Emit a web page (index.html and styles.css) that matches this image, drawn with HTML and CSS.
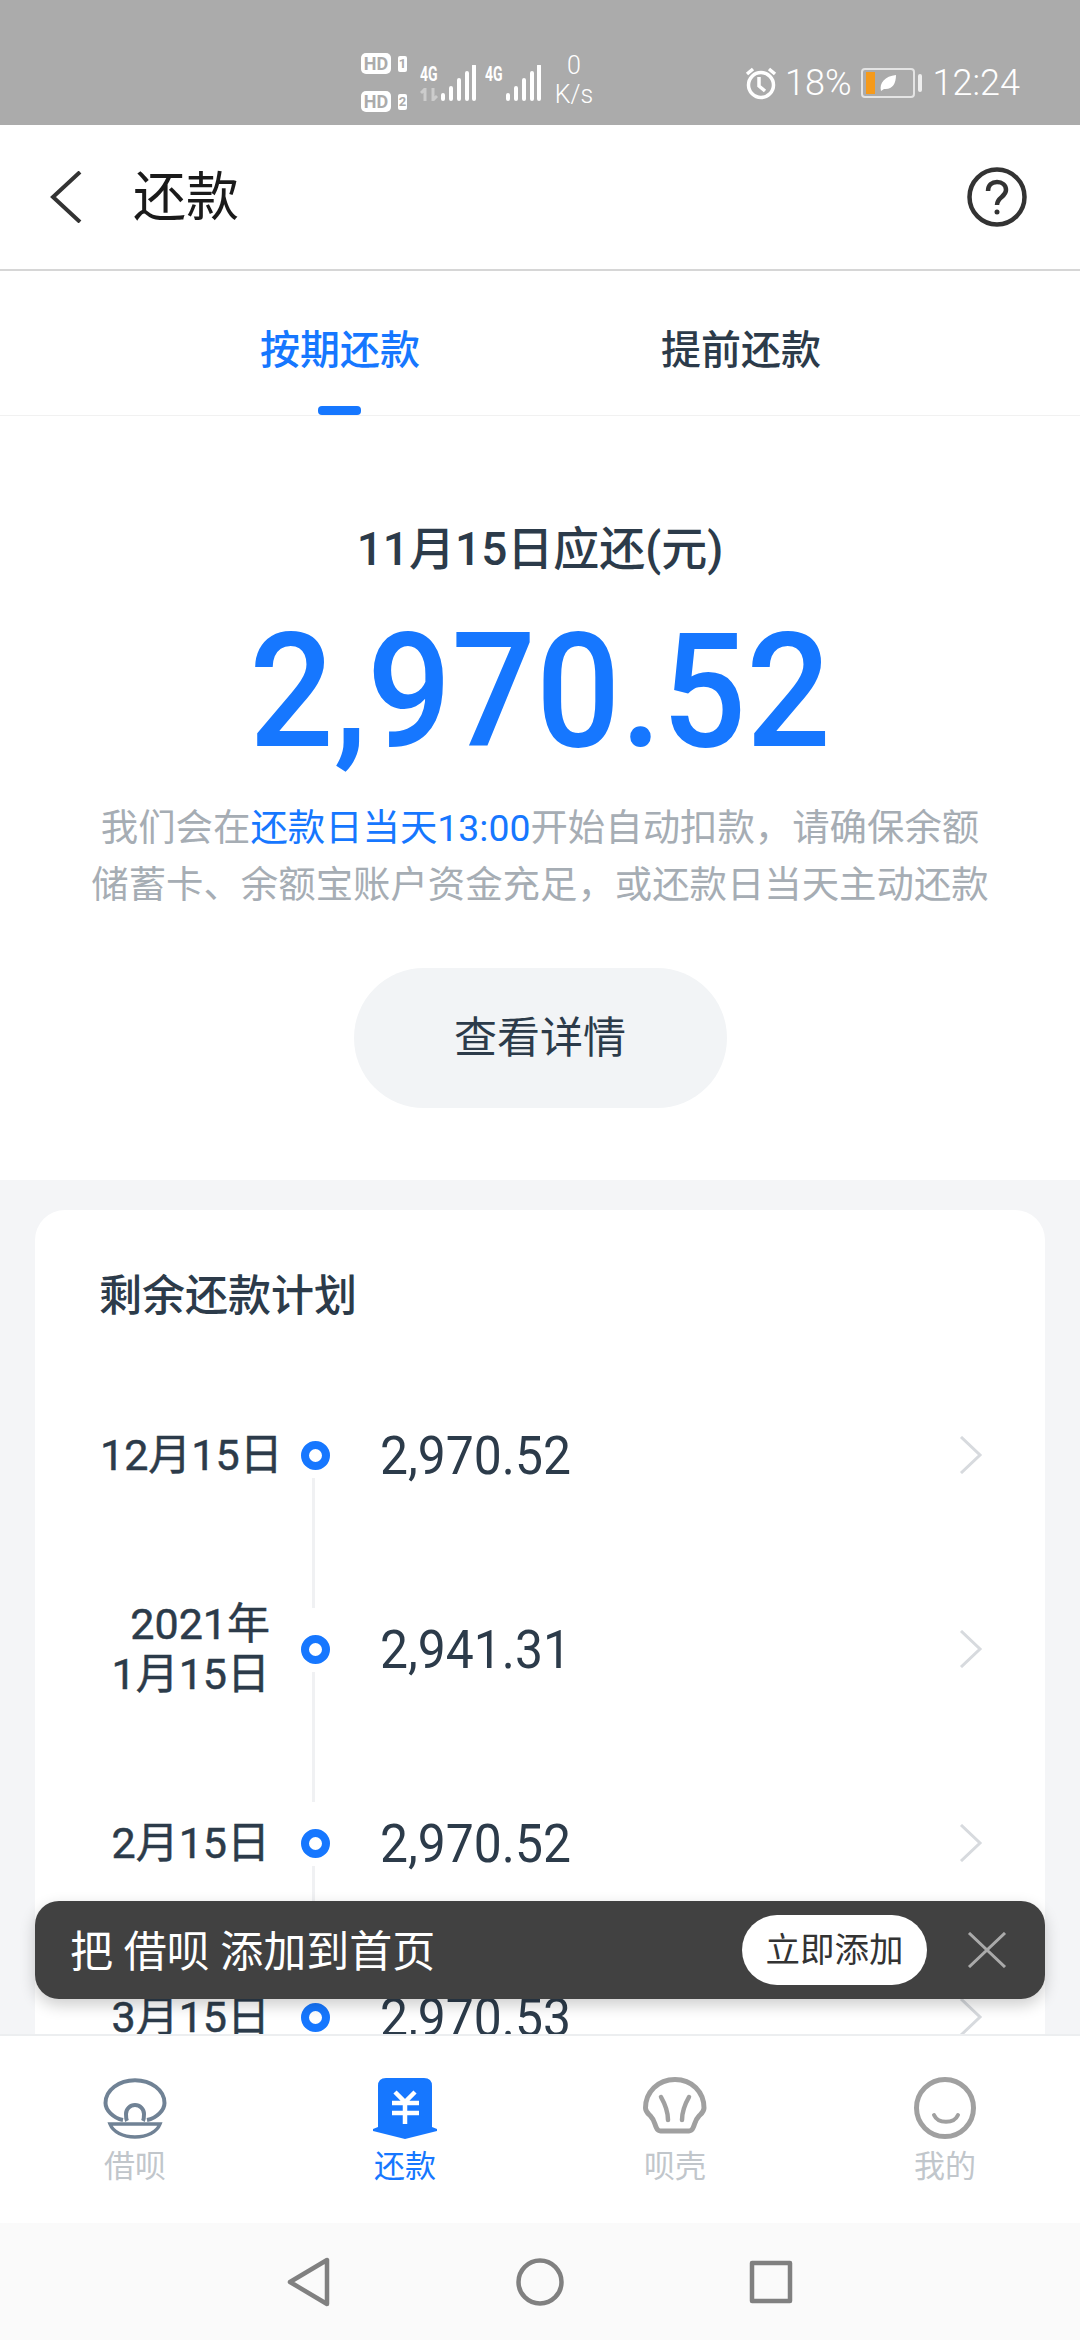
FILE: index.html
```html
<!DOCTYPE html>
<html>
<head>
    <meta charset="utf-8">
    <title>还款</title>
    <link rel="stylesheet" href="styles.css">
</head>
<body>
<div class="app">
    <div class="statusBar">
        <div class="hdCol">
            <div class="hdLine"><span class="hdBadge">HD</span><span class="hdNum">1</span></div>
            <div class="hdLine"><span class="hdBadge">HD</span><span class="hdNum">2</span></div>
        </div>
        <div class="signal">
            <div class="netCol">
                <span class="netType">4G</span>
                <svg width="18" height="13" viewBox="0 0 18 13" fill="none" stroke="#fff" stroke-opacity="0.4" stroke-width="3"><path d="M5 13V1L1 5M13 0v12l4-4"/></svg>
            </div>
            <svg width="36" height="36" viewBox="0 0 36 36"><path d="M3 30v4M11 23v11M19 15v19M27 8v26M34 1v33" stroke="#fff" stroke-width="4" stroke-linecap="round"/></svg>
        </div>
        <div class="signal">
            <div class="netCol">
                <span class="netType">4G</span>
            </div>
            <svg width="36" height="36" viewBox="0 0 36 36"><path d="M3 30v4M11 23v11M19 15v19M27 8v26M34 1v33" stroke="#fff" stroke-width="4" stroke-linecap="round"/></svg>
        </div>
        <div class="speed"><span>0</span><span>K/s</span></div>
        <div class="statusRight">
            <svg width="34" height="34" viewBox="0 0 34 34" fill="none" stroke="#fff" stroke-width="3.5"><circle cx="17" cy="19" r="12.5"/><path d="M15 11v9l6 5M3 8l6-5M31 8l-6-5"/></svg>
            <span class="statusText pct">18%</span>
            <div class="battery"><span class="batteryFill"></span>
                <svg width="18" height="18" viewBox="0 0 18 18"><path d="M2 17C0 9 6 2 17 1c0 9-4 15-12 14z" fill="#fff"/></svg>
            </div>
            <span class="batteryNub"></span>
            <span class="statusText">12:24</span>
        </div>
    </div>

    <div class="header">
        <svg class="backIcon" width="32" height="52" viewBox="0 0 32 52" fill="none"><path d="M30 1L3 26l27 25" stroke="#333" stroke-width="4"/></svg>
        <div class="headerTitle">还款</div>
        <svg class="helpIcon" width="60" height="60" viewBox="0 0 60 60" fill="none" stroke="#333" stroke-width="4.5"><circle cx="30" cy="30" r="27.5"/><path d="M21 24c0-6 4-9 9-9s9 3 9 8c0 7-9 7-9 15"/><circle cx="30" cy="45" r="2.5" fill="#333" stroke="none"/></svg>
    </div>

    <div class="tabs">
        <div class="tab tabActive">按期还款</div>
        <div class="tab">提前还款</div>
    </div>

    <div class="content">
        <div class="summary">
            <div class="dueDate">11月15日应还(元)</div>
            <div class="dueAmount">2,970.52</div>
            <div class="dueNote">我们会在<span class="noteBlue">还款日当天13:00</span>开始自动扣款，请确保余额<br>储蓄卡、余额宝账户资金充足，或还款日当天主动还款</div>
            <div class="detailBtn">查看详情</div>
        </div>

        <div class="planArea">
            <div class="planCard">
                <div class="planTitle">剩余还款计划</div>
                <div class="planRow">
                    <div class="planDate">12月15日</div>
                    <div class="planDot"><span class="planLine"></span></div>
                    <div class="planAmount">2,970.52</div>
                    <svg class="planArrow" width="24" height="38" viewBox="0 0 24 38" fill="none"><path d="M2 1l19 18L2 37" stroke="#d7dade" stroke-width="3"/></svg>
                </div>
                <div class="planRow planRowTall">
                    <div class="planDate">2021年<br>1月15日</div>
                    <div class="planDot"><span class="planLine"></span></div>
                    <div class="planAmount">2,941.31</div>
                    <svg class="planArrow" width="24" height="38" viewBox="0 0 24 38" fill="none"><path d="M2 1l19 18L2 37" stroke="#d7dade" stroke-width="3"/></svg>
                </div>
                <div class="planRow">
                    <div class="planDate">2月15日</div>
                    <div class="planDot"><span class="planLine"></span></div>
                    <div class="planAmount">2,970.52</div>
                    <svg class="planArrow" width="24" height="38" viewBox="0 0 24 38" fill="none"><path d="M2 1l19 18L2 37" stroke="#d7dade" stroke-width="3"/></svg>
                </div>
                <div class="planRow">
                    <div class="planDate">3月15日</div>
                    <div class="planDot"></div>
                    <div class="planAmount">2,970.53</div>
                    <svg class="planArrow" width="24" height="38" viewBox="0 0 24 38" fill="none"><path d="M2 1l19 18L2 37" stroke="#d7dade" stroke-width="3"/></svg>
                </div>
            </div>
        </div>
    </div>

    <div class="tabBar">
        <div class="tabItem">
            <svg width="64" height="64" viewBox="0 0 64 64" fill="none" stroke="#708295" stroke-width="4"><path d="M20 43C10 41 2.5 33 2.5 26 2.5 13 16 3.3 32 3.3S61.5 13 61.5 26c0 7-7.500 15-17.500 17"/><path d="M24 44c-1-2-1-4-1-7a9 9 0 0 1 18 0c0 3 0 5-1 7"/><path d="M7 47h50c-3 8-13 13-25 13S10 55 7 47z" stroke-width="3.500"/></svg>
            <span>借呗</span>
        </div>
        <div class="tabItem tabItemActive">
            <svg width="64" height="64" viewBox="0 0 64 64"><path d="M5 9q0-8 8-8h38q8 0 8 8v41l5 2v2L32 62 0 54v-2l5-2z" fill="#1677ff"/><path d="M22 15l10 10 10-10M19 26h27M19 36h27M32 25v22" fill="none" stroke="#fff" stroke-width="4.500"/></svg>
            <span>还款</span>
        </div>
        <div class="tabItem">
            <svg width="64" height="64" viewBox="0 0 64 64" fill="none" stroke="#a0a0a0" stroke-width="5"><path d="M32 2.500C15 2.500 2.500 15 2.500 31c0 4 3 6 5 8 4 4 4 8 6 12 1 2 2 3 4 3H46c2 0 3-1 4-3 2-4 2-8 6-12 2-2 5-4 5-8C61 15 49 2.500 32 2.500z"/><path d="M18 20c4 7 7 14 7 23M46 20c-4 7-7 14-7 23" stroke-width="4.500" stroke-linecap="round"/></svg>
            <span>呗壳</span>
        </div>
        <div class="tabItem">
            <svg width="64" height="64" viewBox="0 0 64 64" fill="none" stroke="#a0a0a0" stroke-width="5"><circle cx="32" cy="31" r="28.500"/><path d="M21 38c4 9 20 9 24 0" stroke-width="4" stroke-linecap="round"/></svg>
            <span>我的</span>
        </div>
    </div>

    <div class="navBar">
        <svg width="44" height="50" viewBox="0 0 44 50" fill="none" stroke="#808080" stroke-width="4.5" stroke-linejoin="round"><path d="M40 3v44L3 25z"/></svg>
        <svg width="48" height="48" viewBox="0 0 48 48" fill="none" stroke="#808080" stroke-width="4.5"><circle cx="24" cy="24" r="21.5"/></svg>
        <svg width="44" height="44" viewBox="0 0 44 44" fill="none" stroke="#808080" stroke-width="4.5" stroke-linejoin="round"><rect x="3" y="3" width="38" height="38"/></svg>
    </div>

    <div class="addBanner">
        <div class="addText">把 借呗 添加到首页</div>
        <div class="addBtn">立即添加</div>
        <svg class="addClose" width="40" height="36" viewBox="0 0 40 36" fill="none"><path d="M2 1l36 34M38 1L2 35" stroke="#aaa" stroke-width="3"/></svg>
    </div>
</div>
</body>
</html>
```

FILE: styles.css
```css
* {
    box-sizing: border-box;
}

html, body {
    margin: 0;
    padding: 0;
}

body {
    font-family: Roboto, "Noto Sans CJK SC", sans-serif;
    color: #2c3b4a;
}

.app {
    position: relative;
    width: 1080px;
    height: 2340px;
    display: flex;
    flex-direction: column;
    overflow: hidden;
    background-color: #fff;
}

/* status bar */
.statusBar {
    flex: none;
    height: 125px;
    display: flex;
    align-items: center;
    padding: 40px 0 0 361px;
    background-color: #ababab;
    color: #fff;
}

.hdCol {
    display: flex;
    flex-direction: column;
    gap: 17px;
    width: 59px;
}

.hdLine {
    display: flex;
    align-items: center;
    gap: 7px;
}

.hdBadge {
    width: 30px;
    height: 21px;
    border-radius: 5px;
    background-color: #fff;
    color: #ababab;
    font-size: 18px;
    font-weight: 700;
    line-height: 21px;
    text-align: center;
}

.hdNum {
    width: 9px;
    height: 16px;
    border-radius: 2px;
    background-color: #fff;
    color: #ababab;
    font-size: 13px;
    font-weight: 700;
    line-height: 16px;
    text-align: center;
}

.signal {
    display: flex;
    align-items: flex-start;
    width: 65px;
    height: 36px;
}

.netCol {
    display: flex;
    flex-direction: column;
    gap: 4px;
    width: 20px;
}

.netType {
    height: 19px;
    font-size: 20px;
    font-weight: 700;
    line-height: 19px;
    transform: scaleX(0.7);
    transform-origin: left;
}

.speed {
    display: flex;
    flex-direction: column;
    align-items: center;
    width: 40px;
    margin: -5px 0 0 4px;
    font-size: 25px;
    line-height: 29px;
    font-weight: 300;
}

.statusRight {
    display: flex;
    align-items: center;
    margin-left: 150px;
}

.statusText {
    font-size: 36px;
    font-weight: 300;
    line-height: 40px;
}

.pct {
    margin-left: 7px;
}

.battery {
    position: relative;
    display: flex;
    align-items: center;
    justify-content: center;
    width: 54px;
    height: 30px;
    margin-left: 9px;
    border: 2px solid #e4e4e4;
    border-radius: 4px;
}

.batteryFill {
    position: absolute;
    left: 3px;
    top: 2px;
    bottom: 2px;
    width: 9px;
    background-color: #f59a1b;
}

.batteryNub {
    width: 4px;
    height: 18px;
    margin-left: 3px;
    margin-right: 11px;
    border-radius: 2px;
    background-color: #eee;
}

/* header */
.header {
    flex: none;
    height: 146px;
    display: flex;
    align-items: center;
    padding: 0 53px 0 50px;
    border-bottom: 2px solid #d6d6d6;
}

.headerTitle {
    margin-left: 51px;
    padding-top: 2px;
    font-size: 53px;
    line-height: 60px;
    color: #1a1a1a;
}

.helpIcon {
    margin-left: auto;
}

/* tabs */
.tabs {
    flex: none;
    height: 145px;
    display: flex;
    justify-content: center;
    padding-left: 1px;
    gap: 241px;
    border-bottom: 1px solid #f1f1f1;
}

.tab {
    position: relative;
    width: 160px;
    padding-top: 50px;
    font-size: 40px;
    line-height: 60px;
    font-weight: 500;
    white-space: nowrap;
}

.tabActive {
    color: #1677ff;
}

.tabActive::after {
    content: "";
    position: absolute;
    left: 58px;
    bottom: 0;
    width: 43px;
    height: 9px;
    border-radius: 4px;
    background-color: #1677ff;
}

/* summary */
.content {
    flex: 1;
    min-height: 0;
    overflow: hidden;
}

.summary {
    display: flex;
    flex-direction: column;
    align-items: center;
    height: 764px;
    padding-top: 103px;
}

.dueDate {
    font-size: 46px;
    line-height: 60px;
    font-weight: 500;
}

/* the amount font is narrower than Roboto */
.dueAmount {
    margin-top: 33px;
    font-size: 159px;
    line-height: 160px;
    font-weight: 500;
    color: #1677ff;
    transform: scaleX(0.935);
}

.dueNote {
    margin-top: 28px;
    font-size: 37.4px;
    line-height: 57px;
    color: #a6adb4;
    text-align: center;
    white-space: nowrap;
}

.noteBlue {
    color: #1677ff;
}

.detailBtn {
    width: 373px;
    height: 140px;
    margin-top: 54px;
    border-radius: 70px;
    background-color: #f2f4f6;
    font-size: 43px;
    line-height: 140px;
    text-align: center;
}

/* plan */
.planArea {
    height: 900px;
    padding: 30px 35px 0;
    background-color: #f4f5f7;
}

.planCard {
    height: 900px;
    padding-top: 58px;
    border-radius: 30px 30px 0 0;
    background-color: #fff;
}

.planTitle {
    padding-left: 64px;
    margin-bottom: 44px;
    font-size: 43px;
    line-height: 56px;
    font-weight: 500;
}

.planRow {
    height: 174px;
    display: flex;
    align-items: center;
    padding: 0 62px 0 65px;
}

.planRowTall {
    height: 214px;
}

.planDate {
    width: 170px;
    font-size: 43px;
    line-height: 50px;
    font-weight: 400;
    -webkit-text-stroke: 0.5px #2c3b4a;
    text-align: right;
    white-space: nowrap;
}

.planDot {
    position: relative;
    flex: none;
    width: 29px;
    height: 29px;
    margin-left: 31px;
    border: 8px solid #1677ff;
    border-radius: 50%;
}

.planLine {
    position: absolute;
    left: 3px;
    top: 29px;
    width: 3px;
    height: 130px;
    background-color: #f0f1f3;
}

.planAmount {
    margin-left: 50px;
    padding-top: 2px;
    font-size: 53px;
    line-height: 60px;
    font-weight: 400;
    transform: scaleX(0.94);
    transform-origin: left;
}

.planArrow {
    margin-left: auto;
}

/* bottom tab bar */
.tabBar {
    flex: none;
    height: 189px;
    display: flex;
    padding-top: 41px;
    border-top: 2px solid #eceef0;
    background-color: #fff;
}

.tabItem {
    flex: 1;
    display: flex;
    flex-direction: column;
    align-items: center;
    font-size: 31px;
    line-height: 40px;
    color: #c1c6cb;
}

.tabItem span {
    margin-top: 6px;
}

.tabItemActive {
    color: #1677ff;
}

/* android nav */
.navBar {
    flex: none;
    height: 117px;
    display: flex;
    align-items: center;
    justify-content: center;
    gap: 185px;
    background-color: #fafafa;
}

/* floating banner */
.addBanner {
    position: absolute;
    left: 35px;
    right: 35px;
    bottom: 341px;
    height: 98px;
    display: flex;
    align-items: center;
    padding: 0 38px 0 35px;
    border-radius: 24px;
    background-color: #414141;
    box-shadow: 0 6px 16px rgba(0, 0, 0, 0.2);
}

.addText {
    padding-bottom: 5px;
    font-size: 43px;
    color: #fff;
}

.addBtn {
    width: 185px;
    height: 70px;
    margin-left: auto;
    border-radius: 35px;
    background-color: #fff;
    color: #333;
    font-size: 34.5px;
    line-height: 70px;
    text-align: center;
}

.addClose {
    margin-left: 40px;
}
```
